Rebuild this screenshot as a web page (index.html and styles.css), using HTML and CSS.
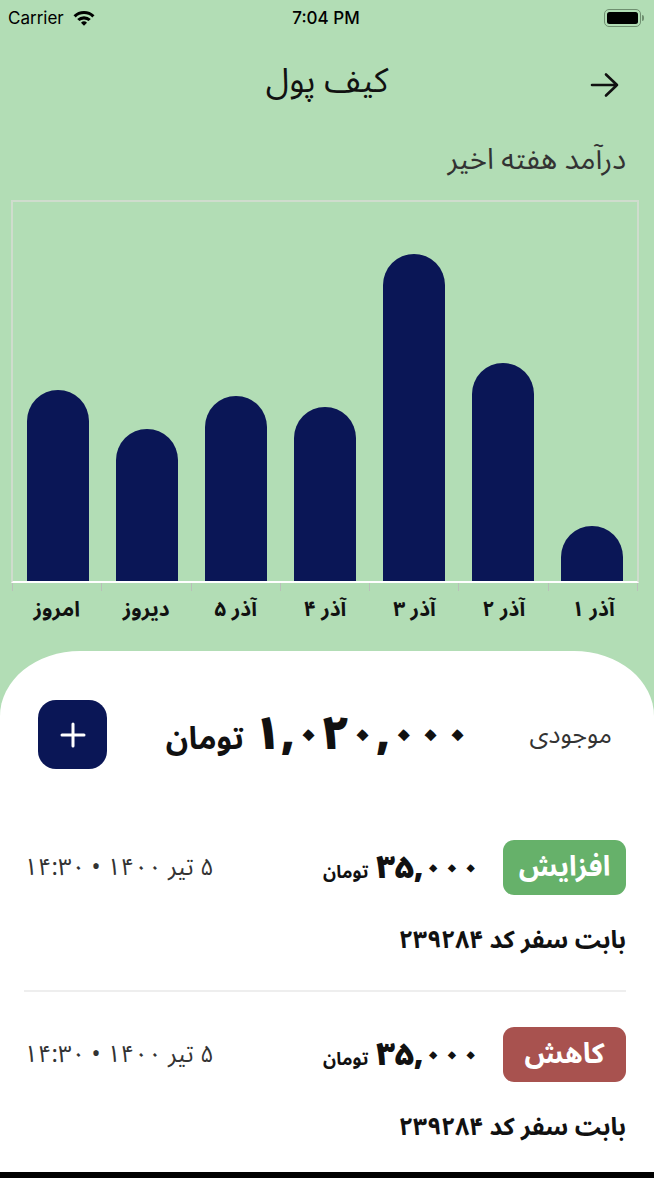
FILE: index.html
```html
<!DOCTYPE html>
<html lang="fa" dir="rtl">
<head>
<meta charset="utf-8">
<title>کیف پول</title>
<link rel="stylesheet" href="styles.css">
</head>
<body>
<div class="screen">
  <div class="statusbar" dir="ltr">
    <div class="sb-left">
      <span class="carrier">Carrier</span>
      <svg class="wifi" width="24" height="18" viewBox="0 0 24 18">
        <path d="M1.5 6.2 A15 15 0 0 1 22.5 6.2 L20.3 8.4 A12 12 0 0 0 3.7 8.4 Z" fill="#000"/>
        <path d="M5.2 9.9 A10 10 0 0 1 18.8 9.9 L16.6 12.1 A7 7 0 0 0 7.4 12.1 Z" fill="#000"/>
        <path d="M9 13.7 A4.5 4.5 0 0 1 15 13.7 L12 16.8 Z" fill="#000"/>
      </svg>
    </div>
    <div class="time">7:04 PM</div>
    <div class="sb-right">
      <div class="battery"><div class="battery-fill"></div></div>
      <div class="battery-tip"></div>
    </div>
  </div>

  <header class="header">
    <h1 class="title">کیف پول</h1>
    <button class="back" aria-label="back">
      <svg width="32" height="28" viewBox="0 0 32 28">
        <path d="M3 14 H28 M17 3.5 L28 14 L17 24.5" fill="none" stroke="#111" stroke-width="2.6" stroke-linecap="round" stroke-linejoin="round"/>
      </svg>
    </button>
  </header>

  <div class="subtitle">درآمد هفته اخیر</div>

  <div class="chart">
    <div class="plot">
      <div class="col"><div class="bar" style="height:55px"></div></div>
      <div class="col"><div class="bar" style="height:218px"></div></div>
      <div class="col"><div class="bar" style="height:327px"></div></div>
      <div class="col"><div class="bar" style="height:174px"></div></div>
      <div class="col"><div class="bar" style="height:185px"></div></div>
      <div class="col"><div class="bar" style="height:152px"></div></div>
      <div class="col"><div class="bar" style="height:191px"></div></div>
    </div>
    <div class="ticks">
      <span></span><span></span><span></span><span></span><span></span><span></span><span></span>
    </div>
    <div class="labels">
      <span>آذر ۱</span>
      <span>آذر ۲</span>
      <span>آذر ۳</span>
      <span>آذر ۴</span>
      <span>آذر ۵</span>
      <span>دیروز</span>
      <span>امروز</span>
    </div>
  </div>

  <main class="card">
    <div class="balance">
      <div class="balance-label">موجودی</div>
      <div class="balance-amount"><span class="big-num">۱,۰۲۰,۰۰۰</span> <span class="big-unit">تومان</span></div>
      <button class="add" aria-label="add">
        <svg width="26" height="26" viewBox="0 0 26 26">
          <path d="M13 2 V24 M2 13 H24" stroke="#fff" stroke-width="3" stroke-linecap="round"/>
        </svg>
      </button>
    </div>

    <div class="tx">
      <div class="tx-top">
        <span class="badge up">افزایش</span>
        <span class="tx-amount"><span class="num">۳۵,۰۰۰</span> <span class="unit">تومان</span></span>
        <span class="tx-date">۵ تیر ۱۴۰۰ • ۱۴:۳۰</span>
      </div>
      <div class="tx-desc">بابت سفر کد ۲۳۹۲۸۴</div>
    </div>

    <div class="divider"></div>

    <div class="tx">
      <div class="tx-top">
        <span class="badge down">کاهش</span>
        <span class="tx-amount"><span class="num">۳۵,۰۰۰</span> <span class="unit">تومان</span></span>
        <span class="tx-date">۵ تیر ۱۴۰۰ • ۱۴:۳۰</span>
      </div>
      <div class="tx-desc">بابت سفر کد ۲۳۹۲۸۴</div>
    </div>
  </main>
  <div class="home-strip"></div>
</div>
</body>
</html>
```
FILE: styles.css
```css
* { box-sizing: border-box; }
html, body { margin: 0; padding: 0; }
body {
  width: 654px;
  height: 1178px;
  overflow: hidden;
  background: #b2ddb5;
  font-family: "Noto Sans Arabic", "DejaVu Sans", sans-serif;
  color: #111;
}
.screen {
  width: 654px;
  height: 1178px;
  display: flex;
  flex-direction: column;
}

/* status bar */
.statusbar {
  height: 36px;
  flex: none;
  display: flex;
  align-items: center;
  justify-content: space-between;
  padding: 0 10px 0 8px;
  font-family: "Inter", "Liberation Sans", sans-serif;
  font-size: 17px;
  color: #000;
}
.sb-left { display: flex; align-items: center; gap: 8px; width: 140px; }
.wifi { display: block; }
.time { font-weight: 500; }
.sb-right { display: flex; align-items: center; justify-content: flex-end; width: 140px; }
.battery {
  width: 37px;
  height: 18px;
  border: 1.5px solid #6f8f70;
  border-radius: 5px;
  padding: 2px;
}
.battery-fill { width: 100%; height: 100%; background: #000; border-radius: 2.5px; }
.battery-tip { width: 2px; height: 6px; background: #6f8f70; border-radius: 0 2px 2px 0; margin-left: 1px; }

/* header */
.header {
  position: relative;
  height: 90px;
  flex: none;
  display: flex;
  align-items: center;
  justify-content: center;
}
.title {
  margin: 0;
  font-size: 34px;
  font-weight: 400;
  line-height: 1;
}
.back {
  position: absolute;
  left: 589px;
  top: 35px;
  background: none;
  border: 0;
  padding: 0;
  display: block;
}
.back svg { display: block; }

.subtitle {
  height: 74px;
  flex: none;
  padding: 18px 28px 0 0;
  font-size: 29px;
  color: #333;
  line-height: 32px;
}

/* chart */
.chart {
  margin: 0 16px 0 12px;
  width: 626px;
  flex: none;
}
.plot {
  height: 383px;
  border: 2px solid #cfdccd;
  border-bottom: 2px solid #ffffff;
  display: grid;
  grid-template-columns: repeat(7, 1fr);
  align-items: end;
  margin: 0 -1px;
}
.col { display: flex; justify-content: center; align-items: flex-end; height: 100%; }
.bar {
  width: 62px;
  background: #0a1656;
  border-radius: 31px 31px 0 0;
}
.ticks {
  display: grid;
  grid-template-columns: repeat(7, 1fr);
  height: 8px;
  border-right: 1.5px solid #b9bfb9;
}
.ticks span { border-left: 1.5px solid #b9bfb9; }
.labels {
  display: grid;
  grid-template-columns: repeat(7, 1fr);
  text-align: center;
  font-size: 21px;
  font-weight: 700;
  line-height: 26px;
  padding-top: 5px;
  color: #111;
}

/* card */
.card {
  margin-top: 29px;
  flex: 1;
  background: #fff;
  border-radius: 80px 80px 0 0 / 65px 65px 0 0;
  padding: 49px 28px 0 24px;
}
.balance {
  display: flex;
  align-items: center;
  justify-content: space-between;
  height: 69px;
  padding: 0 14px 0 14px;
}
.balance-label { font-size: 25px; color: #333; }
.balance-amount { display: flex; align-items: baseline; gap: 10px; font-weight: 700; }
.big-num { font-size: 46px; font-weight: 900; letter-spacing: 1px; }
.big-unit { font-size: 31px; }
.add {
  width: 69px;
  height: 69px;
  border: 0;
  border-radius: 18px;
  background: #0a1656;
  display: flex;
  align-items: center;
  justify-content: center;
  padding: 0;
}
.add svg { display: block; }

.tx { padding-top: 71px; }
.tx-top {
  display: flex;
  align-items: center;
  height: 55px;
  gap: 23px;
}
.badge {
  height: 55px;
  width: 123px;
  border-radius: 11px;
  color: #fff;
  font-weight: 700;
  font-size: 28px;
  display: flex;
  align-items: center;
  justify-content: center;
}
.badge.up { background: #66b16a; }
.badge.down { background: #a8524f; }
.tx-amount { display: flex; align-items: baseline; gap: 8px; font-weight: 700; }
.tx-amount .num { font-size: 32px; font-weight: 900; }
.tx-amount .unit { font-size: 18px; }
.tx-date { margin-right: auto; font-size: 24px; letter-spacing: 0.5px; color: #333; }
.tx-desc {
  margin-top: 30px;
  font-size: 24.5px;
  font-weight: 700;
  line-height: 30px;
}
.divider {
  height: 2px;
  background: #eeeeee;
  margin-top: 35px;
}
.divider + .tx { padding-top: 35px; }
.home-strip { height: 6px; flex: none; background: #000; }
```
